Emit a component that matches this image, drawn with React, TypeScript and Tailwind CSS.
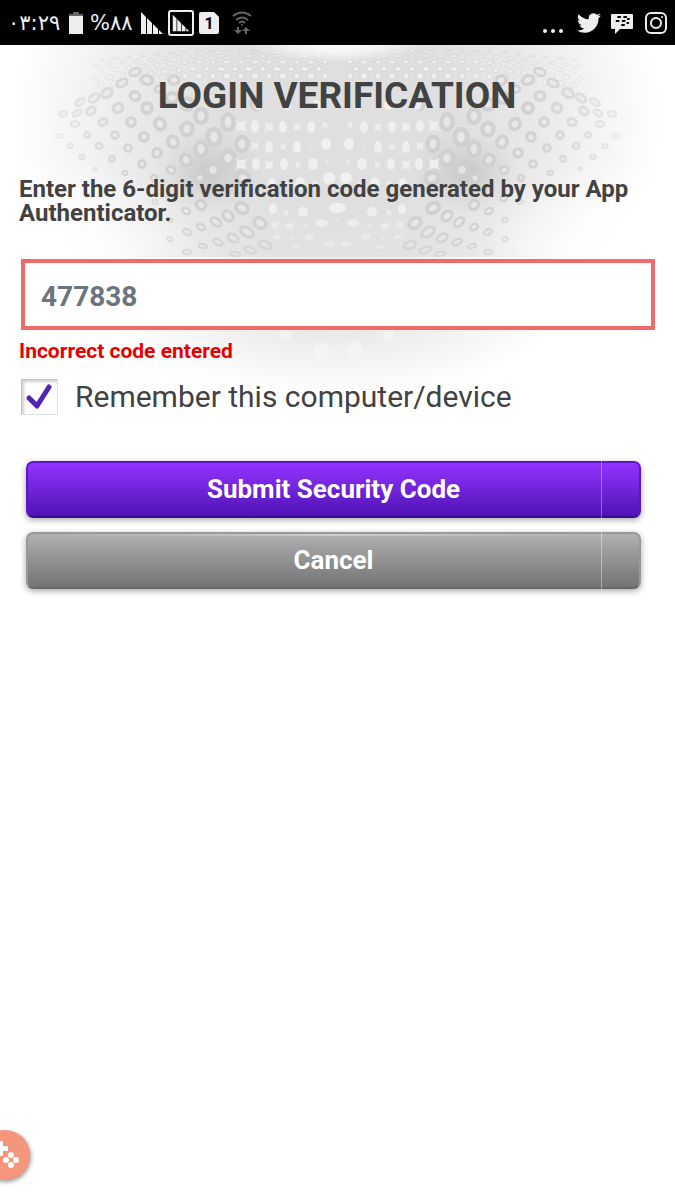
import { useState } from "react"
import type { FormEvent } from "react"

// [x, y, radius x, radius y, tilt] for the left half of the backdrop, the right half is mirrored
const rings = [
  [147, 80, 8, 6, 20], [122, 83, 8, 5, -30], [135, 72, 8, 5, -20], [135, 96, 7, 6, 25], [147, 108, 7, 7, 20],
  [107, 93, 8, 6, -30], [118, 108, 7, 6, -30], [131, 122, 6, 6, 20], [144, 137, 6, 6, 20],
  [157, 153, 6, 6, 30], [171, 170, 6, 5, 30], [160, 124, 7, 8, -30], [173, 142, 7, 8, -30],
  [186, 160, 7, 8, -30], [187, 129, 8, 9, 0], [201, 149, 8, 10, 0], [213, 170, 9, 9, 0],
  [201, 116, 8, 10, 0], [214, 137, 9, 11, 0], [228, 158, 9, 10, 0], [228, 122, 8, 11, 0],
  [242, 144, 8, 10, 0], [94, 98, 8, 5, -35], [91, 111, 7, 5, -35], [103, 122, 6, 5, -20],
  [115, 135, 5, 5, 0], [128, 148, 5, 5, 20], [142, 164, 5, 5, 0], [154, 178, 4, 4, 0],
  [80, 102, 8, 4, -35], [77, 113, 7, 4, -30], [87, 135, 4, 4, 0], [99, 146, 5, 4, 0],
  [112, 159, 4, 4, 0], [125, 173, 4, 3, 0], [75, 124, 6, 4, -10], [70, 146, 4, 3, 0],
  [82, 157, 4, 3, 0], [95, 169, 3, 2, 0], [59, 136, 5, 3, 0], [63, 114, 6, 4, -10],
  [155, 202, 4, 3, 20], [171, 198, 5, 4, 30], [186, 211, 6, 4, 30], [170, 220, 4, 3, 20],
  [201, 205, 7, 6, 40], [216, 222, 8, 5, 40], [201, 227, 6, 4, 30], [187, 232, 6, 4, 25],
  [170, 239, 4, 3, 20], [247, 232, 10, 6, 30], [233, 238, 8, 5, 30], [218, 242, 7, 4, 25],
  [203, 246, 6, 3, 15], [187, 252, 6, 3, 10], [260, 223, 9, 7, 30], [242, 208, 9, 7, 30],
  [228, 216, 8, 6, 40], [265, 245, 9, 5, 20], [250, 250, 9, 4, 20], [235, 254, 7, 3, 10],
  [172, 98, 8, 7, 0], [160, 89, 7, 5, 0], [187, 104, 8, 8, 0], [243, 178, 9, 8, 20],
  [200, 178, 6, 6, 20], [174, 80, 7, 6, 0], [256, 103, 7, 9, 0],
]

const specks = [
  [255, 126, 4, 6], [283, 127, 4, 6], [311, 127, 4, 6], [269, 147, 4, 6], [297, 147, 4, 6],
  [326, 144, 5, 6], [256, 164, 4, 6], [284, 164, 4, 6], [313, 164, 5, 6], [300, 183, 5, 6],
  [329, 178, 6, 6], [272, 183, 4, 5], [258, 105, 4, 5], [287, 105, 4, 5], [317, 105, 4, 5],
  [273, 209, 4, 5], [303, 212, 5, 5], [337, 208, 8, 5], [290, 226, 4, 3], [322, 223, 6, 4],
  [277, 237, 4, 2], [309, 237, 5, 3], [329, 244, 6, 3], [296, 247, 5, 2], [337, 221, 1, 1],
]

const stars = [
  [269, 127, 5], [297, 127, 4], [325, 125, 3], [241, 126, 6], [255, 146, 4], [283, 147, 3],
  [311, 147, 1], [269, 165, 5], [298, 165, 3], [327, 162, 2], [241, 164, 6], [286, 184, 3],
  [315, 184, 3], [286, 213, 3], [305, 226, 2], [292, 238, 2], [275, 225, 4],
]

function HalfPattern() {
  const rows = [51, 56, 62, 69, 76]
  return (
    <g>
      {rows.map((y, row) =>
        Array.from({ length: 17 }, (_, i) => {
          const x = 325 - i * 14 - (row % 2) * 6
          return (
            <ellipse
              key={`${row}-${i}`}
              cx={x}
              cy={y + Math.max(0, (190 - x) * 0.1)}
              rx={i % 2 ? 4 : 3}
              ry={1 + row * 0.6}
              fill="#f0f0f0"
              stroke="#d4d4d4"
              opacity={Math.min(0.9, x / 260)}
            />
          )
        })
      )}
      {rings.map(([x, y, rx, ry, tilt], i) => (
        <ellipse
          key={i}
          cx={x}
          cy={y}
          rx={rx * 0.7}
          ry={ry * 0.7}
          transform={`rotate(${tilt} ${x} ${y})`}
          fill="#e9e9e9"
          stroke="#cfcfcf"
          strokeWidth={Math.min(rx, ry) * 0.55}
          opacity={Math.min(0.85, x / 170)}
        />
      ))}
      {specks.map(([x, y, rx, ry], i) => (
        <ellipse key={i} cx={x} cy={y} rx={rx} ry={ry} fill="#f0f0f0" />
      ))}
      {stars.map(([x, y, r], i) => (
        <path
          key={i}
          d={`M${x - r} ${y - r}Q${x} ${y - r / 3} ${x + r} ${y - r}Q${x + r / 3} ${y} ${x + r} ${y + r}Q${x} ${y + r / 3} ${x - r} ${y + r}Q${x - r / 3} ${y} ${x - r} ${y - r}`}
          fill="#eeeeee"
        />
      ))}
    </g>
  )
}

function Backdrop() {
  return (
    <svg className="absolute inset-x-0 top-0 w-full" viewBox="0 45 675 355" aria-hidden="true">
      <defs>
        <radialGradient id="base" gradientUnits="userSpaceOnUse" cx="0" cy="0" r="1" gradientTransform="translate(337 120) scale(325 265)">
          <stop offset="0" stopColor="#dfdfdf" />
          <stop offset="0.35" stopColor="#dfdfdf" />
          <stop offset="0.6" stopColor="#e8e8e8" />
          <stop offset="1" stopColor="#ffffff" />
        </radialGradient>
        <radialGradient id="shade">
          <stop offset="0" stopColor="#b8b8b8" stopOpacity="0.65" />
          <stop offset="1" stopColor="#c8c8c8" stopOpacity="0" />
        </radialGradient>
        <radialGradient id="lower">
          <stop offset="0" stopColor="#dedede" />
          <stop offset="1" stopColor="#dedede" stopOpacity="0" />
        </radialGradient>
        <radialGradient id="glow">
          <stop offset="0" stopColor="#fff" />
          <stop offset="0.5" stopColor="#fff" stopOpacity="0.7" />
          <stop offset="1" stopColor="#fff" stopOpacity="0" />
        </radialGradient>
      </defs>
      <rect y="45" width="675" height="212" fill="url(#base)" />
      <ellipse cx="208" cy="172" rx="55" ry="42" fill="url(#shade)" />
      <ellipse cx="467" cy="172" rx="55" ry="42" fill="url(#shade)" />
      <HalfPattern />
      <g transform="translate(675 0) scale(-1 1)">
        <HalfPattern />
      </g>
      <ellipse cx="337" cy="42" rx="90" ry="20" fill="url(#glow)" />
      <ellipse cx="10" cy="250" rx="190" ry="95" fill="url(#glow)" />
      <ellipse cx="665" cy="250" rx="190" ry="95" fill="url(#glow)" />
      <rect y="257" width="675" height="143" fill="#fff" />
      <ellipse cx="337" cy="300" rx="230" ry="95" fill="url(#lower)" />
      <g fill="#fff" opacity="0.35">
        <circle cx="321" cy="350" r="8" />
        <circle cx="355" cy="350" r="8" />
        <circle cx="286" cy="335" r="6" />
        <circle cx="389" cy="335" r="6" />
      </g>
    </svg>
  )
}

function SignalBars({ className }: { className: string }) {
  return (
    <svg className={className} viewBox="0 0 24 24" fill="currentColor" aria-hidden="true">
      <path d="M1 1l5 5v17H1zM7 7l5 5v11H7zM13 13l5 5v5h-5zM19 19l4 4h-4z" />
    </svg>
  )
}

function StatusBar() {
  return (
    <header className="relative flex h-[45px] items-center justify-between bg-black px-2 text-[#eeeeee]">
      <div className="flex items-center">
        <span className="w-[54px] font-['DejaVu_Sans',sans-serif] text-[21px] leading-6">٠٣:٢٩</span>
        <svg className="ml-[6px] h-6 w-4" viewBox="0 0 16 24" aria-hidden="true">
          <path d="M5 1h6v2h4v3H1V3h4z" fill="#666" />
          <path d="M1 5h14v18H1z" fill="currentColor" />
        </svg>
        <span className="ml-[6px] w-[42px] font-['DejaVu_Sans',sans-serif] text-[21px] leading-6">%٨٨</span>
        <SignalBars className="ml-2 h-6 w-6" />
        <span className="ml-1 flex size-[26px] items-center justify-center rounded-[3px] border-2 border-current">
          <SignalBars className="size-[18px]" />
        </span>
        <svg className="ml-[5px] h-[22px] w-5" viewBox="0 0 20 22" aria-hidden="true">
          <path d="M2 0h13l5 5v15a2 2 0 0 1-2 2H2a2 2 0 0 1-2-2V2a2 2 0 0 1 2-2z" fill="currentColor" />
          <text x="10" y="17" textAnchor="middle" fontFamily="Roboto, sans-serif" fontSize="16" fontWeight="700" fill="#000">1</text>
        </svg>
        <svg className="ml-[13px] h-6 w-5" viewBox="0 0 20 24" fill="none" stroke="#666" strokeWidth="2" aria-hidden="true">
          <path d="M1 5q9-7 18 0M4 9q6-5 12 0M7 12q3-3 6 0" />
          <circle cx="10" cy="14" r="1" fill="#666" stroke="none" />
          <path d="M6 16v4M14 23v-4" />
          <path d="M2 19h8l-4 4zM10 20h8l-4-4z" fill="#666" stroke="none" />
        </svg>
      </div>

      <div className="flex items-center">
        <svg className="h-6 w-5" viewBox="0 0 20 24" fill="currentColor" aria-hidden="true">
          <circle cx="2" cy="20" r="2" />
          <circle cx="10" cy="20" r="2" />
          <circle cx="18" cy="20" r="2" />
        </svg>
        <svg className="ml-[14px] size-6" viewBox="0 0 24 24" fill="currentColor" aria-hidden="true">
          <path d="M23.950 4.570a10 10 0 0 1-2.820.770 4.960 4.960 0 0 0 2.160-2.720c-.950.550-2 .960-3.130 1.190a4.920 4.920 0 0 0-8.380 4.480C7.690 8.090 4.070 6.130 1.640 3.160a4.920 4.920 0 0 0 1.520 6.570 4.900 4.900 0 0 1-2.230-.610v.060c0 2.390 1.700 4.380 3.950 4.830a5 5 0 0 1-2.210.080 4.940 4.940 0 0 0 4.600 3.420A9.870 9.870 0 0 1 0 19.540a14 14 0 0 0 7.550 2.210c9.050 0 14-7.500 14-13.980 0-.210 0-.420-.020-.630a9.940 9.940 0 0 0 2.420-2.570z" />
        </svg>
        <svg className="ml-[10px] h-6 w-[22px]" viewBox="0 0 22 24" aria-hidden="true">
          <path d="M1 3h20a1 1 0 0 1 1 1v13a1 1 0 0 1-1 1H9l-5 5v-5H1a1 1 0 0 1-1-1V4a1 1 0 0 1 1-1z" fill="currentColor" />
          <g fill="#000" transform="translate(1 0) skewX(-8)">
            <rect x="6" y="5" width="4" height="2" rx="1" />
            <rect x="12" y="5" width="4" height="2" rx="1" />
            <rect x="5" y="9" width="4" height="2" rx="1" />
            <rect x="11" y="9" width="4" height="2" rx="1" />
            <rect x="16" y="7" width="3" height="2" rx="1" />
            <rect x="16" y="11" width="3" height="2" rx="1" />
            <rect x="11" y="13" width="4" height="2" rx="1" />
          </g>
        </svg>
        <svg className="ml-3 size-[22px]" viewBox="0 0 22 22" fill="none" stroke="currentColor" strokeWidth="2" aria-hidden="true">
          <rect x="1" y="1" width="20" height="20" rx="5" />
          <circle cx="11" cy="11" r="5" />
          <circle cx="17" cy="5" r="1" fill="currentColor" stroke="none" />
        </svg>
      </div>
    </header>
  )
}

export default function App() {
  const [code, setCode] = useState("477838")
  const [remember, setRemember] = useState(true)

  const handleSubmit = (e: FormEvent) => e.preventDefault()

  return (
    <div className="relative flex min-h-screen flex-col overflow-hidden bg-white font-[Roboto,sans-serif] text-[#424242]">
      <StatusBar />

      <main className="relative flex-1">
        <Backdrop />

        <form onSubmit={handleSubmit} className="relative pl-[19px] pr-5 pt-[30px]">
          <h1 className="text-center text-[37px] font-bold leading-[42px]">LOGIN VERIFICATION</h1>
          <label htmlFor="code" className="mt-[60px] block text-[24px] font-bold leading-6">
            Enter the 6-digit verification code generated by your App Authenticator.
          </label>

          {/* Code field */}
          <div className="mt-[34px] flex pl-[2px]">
            <input
              id="code"
              type="text"
              inputMode="numeric"
              value={code}
              onChange={e => setCode(e.target.value)}
              aria-invalid="true"
              aria-describedby="code-error"
              className="h-[71px] w-full border-4 border-[#f06a6a] bg-white px-4 pt-1 text-[28px] font-bold text-[#6b757b] outline-none"
            />
          </div>
          <p id="code-error" className="mt-[9px] text-[21px] font-bold leading-6 text-[#e60000]">
            Incorrect code entered
          </p>

          {/* Remember */}
          <label className="mt-4 flex items-center pl-[2px]">
            <span className="relative flex">
              <input
                type="checkbox"
                checked={remember}
                onChange={e => setRemember(e.target.checked)}
                className="peer h-9 w-[37px] appearance-none border border-[#e2e2e2] border-l-[#c4c4c4] border-t-[#c4c4c4] bg-white shadow-[inset_2px_2px_3px_#d0d0d0]"
              />
              <svg className="pointer-events-none absolute inset-0 hidden h-9 w-[37px] peer-checked:block" viewBox="0 0 37 36" fill="none" aria-hidden="true">
                <path d="M8 19l8 8L28 8" stroke="#4f25b5" strokeWidth="5" strokeLinejoin="round" strokeLinecap="round" />
              </svg>
            </span>
            <span className="ml-[17px] text-[30px] leading-9">Remember this computer/device</span>
          </label>

          {/* Actions */}
          <div className="mt-[46px] flex flex-col gap-[14px] pl-[7px] pr-[14px]">
            <button
              type="submit"
              className="relative h-[57px] rounded-[7px] border-2 border-[#5b18c4] border-b-[#3a0c91] bg-linear-to-b from-[#9333ff] to-[#4f12b5] text-[26px] font-bold text-white shadow-[0_2px_6px_rgba(0,0,0,0.35)]"
            >
              Submit Security Code
              <span className="absolute -inset-y-[2px] right-[37px] w-px bg-white/35" />
            </button>
            <button
              type="button"
              className="relative h-[57px] rounded-[7px] border-2 border-[#999999] border-b-[#666666] bg-linear-to-b from-[#b0b0b0] to-[#747474] text-[26px] font-bold text-white shadow-[0_2px_6px_rgba(0,0,0,0.35)]"
            >
              Cancel
              <span className="absolute inset-x-4 top-0 h-[2px] bg-linear-to-r from-transparent via-[#cccccc] to-transparent" />
              <span className="absolute -inset-y-[2px] right-[37px] w-px bg-white/40" />
            </button>
          </div>
        </form>
      </main>

      {/* Game launcher */}
      <button
        type="button"
        aria-label="Game tools"
        className="absolute -left-5 bottom-5 size-[50px] rounded-full bg-[#f4967b] shadow-[1px_2px_4px_rgba(0,0,0,0.4)]"
      >
        <svg viewBox="0 0 50 50" fill="#fff" aria-hidden="true">
          <path d="M19 11h4v5h5v5h-5v5h-4v-5h-5v-5h5z" />
          <circle cx="31" cy="25" r="3" />
          <circle cx="26" cy="30" r="3" />
          <circle cx="36" cy="30" r="3" />
          <circle cx="31" cy="35" r="3" />
        </svg>
      </button>
    </div>
  )
}
